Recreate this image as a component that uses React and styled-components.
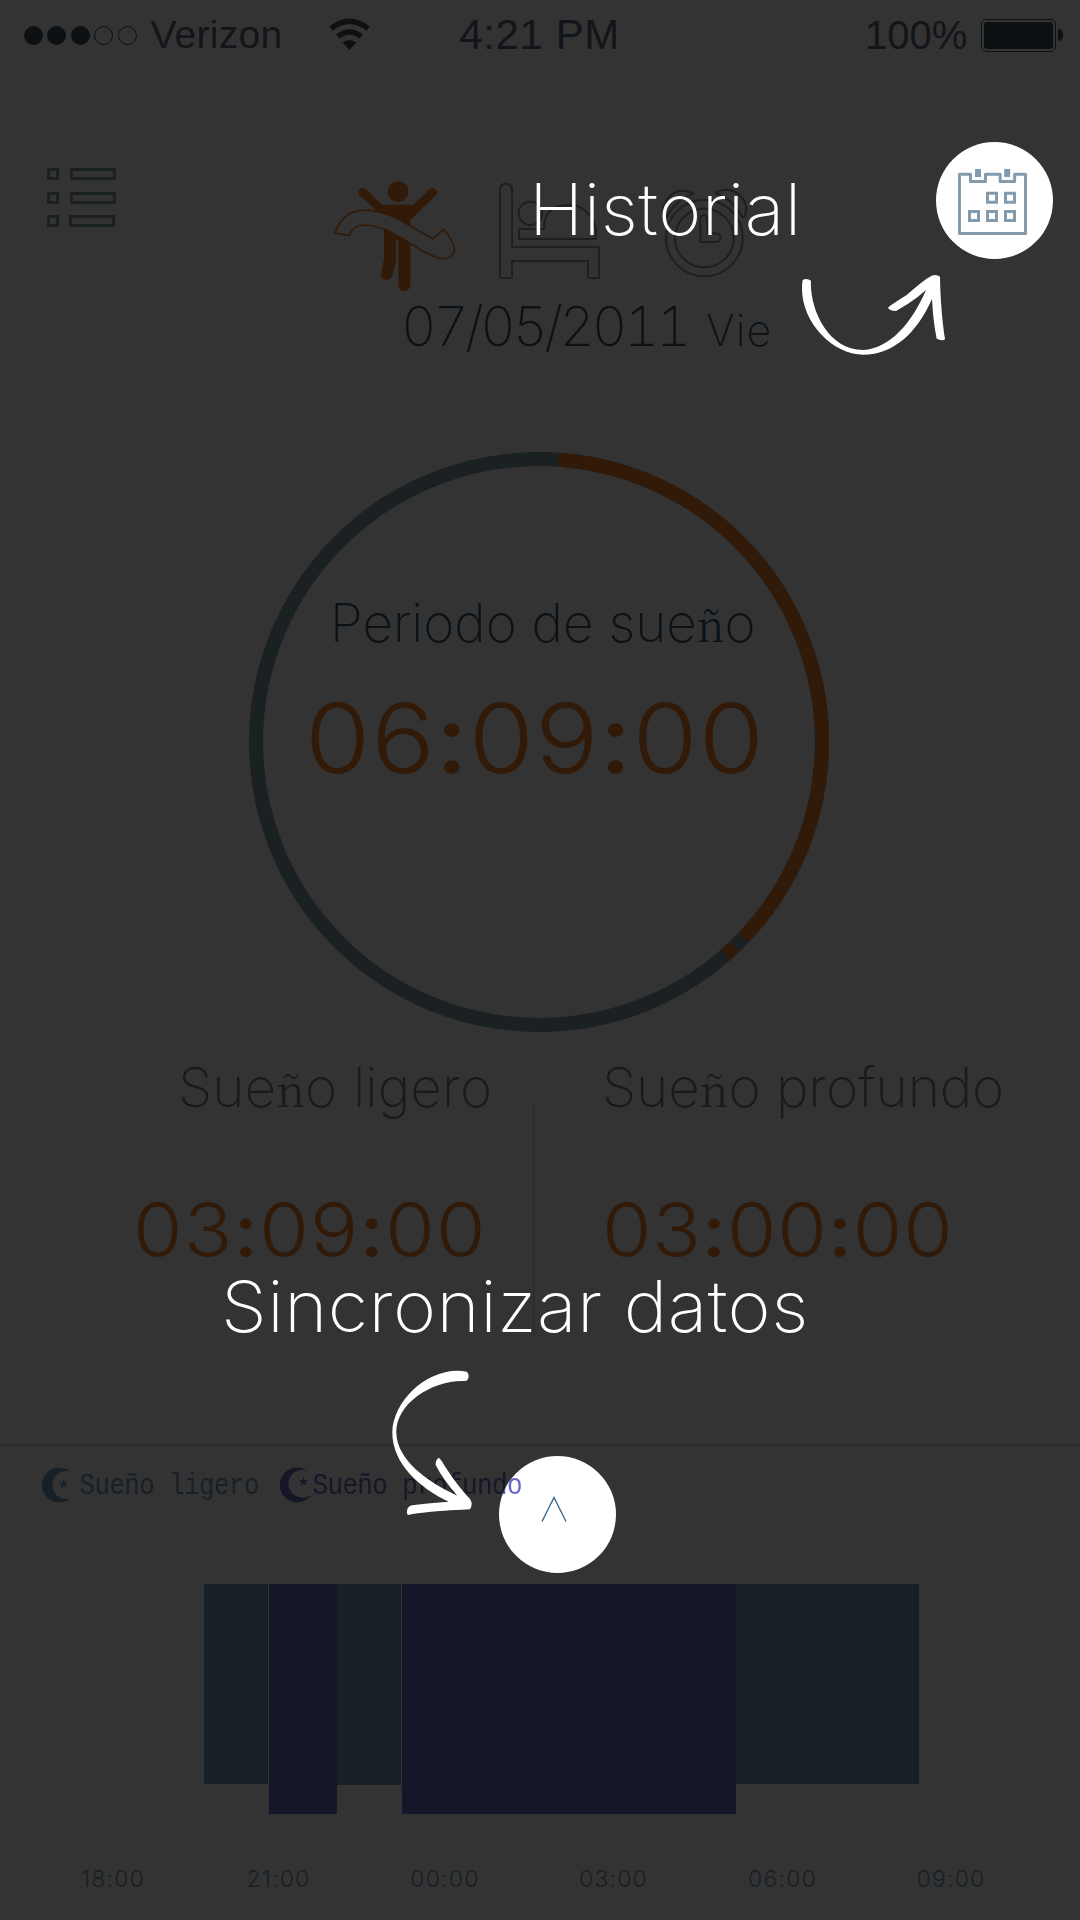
import React from "react";
import styled, { createGlobalStyle } from "styled-components";

const c = {
  bg: "#333333",
  ink: "#0a1217",
  status: "#0d1113",
  slate: "#1b2023",
  label: "#171b1e",
  orange: "#321a09",
  light: "#172027",
  deep: "#151627",
  rule: "#2d2d2d",
};

const Global = createGlobalStyle`
  * { box-sizing: border-box; }
  body { margin: 0; background: ${c.bg}; }
  svg { display: block; }
`;

const Screen = styled.main`
  position: relative;
  display: flex;
  flex-direction: column;
  width: 1080px;
  height: 1920px;
  overflow: hidden;
  background: ${c.bg};
  font-family: Inter, "Liberation Sans", sans-serif;
  font-weight: 200;
  color: ${c.ink};
  white-space: nowrap;
`;

/* ---- status bar ---- */
const StatusBar = styled.header`
  display: flex;
  align-items: center;
  height: 70px;
  padding: 0 17px 0 23.5px;
  font-family: "Liberation Sans", Arial, sans-serif;
  font-weight: 400;
  color: #121519;
`;
const Signal = styled.div`
  display: flex;
  gap: 4.6px;
  margin-right: 13.5px;
`;
const Dot = styled.i`
  width: 19px;
  height: 19px;
  border-radius: 50%;
  border: 1.5px solid ${c.status};
  background: ${(p) => (p.$on ? c.status : "transparent")};
`;
const StatusText = styled.span`
  font-size: ${(p) => p.$size}px;
  letter-spacing: ${(p) => p.$track || 0}px;
  line-height: 72px;
  width: ${(p) => p.$w}px;
`;
const Wifi = styled.svg`
  margin: 0 89px 2px 0;
`;
const Battery = styled.div`
  display: flex;
  align-items: center;
  gap: 2px;
`;
const Cell = styled.div`
  width: 75px;
  height: 33px;
  padding: 2px;
  border: 1.5px solid ${c.status};
  border-radius: 5px;
  &::before {
    content: "";
    display: block;
    height: 100%;
    border-radius: 3px;
    background: ${c.status};
  }
`;
const Tip = styled.div`
  width: 5px;
  height: 12px;
  border-radius: 0 5px 5px 0;
  background: ${c.status};
`;

/* ---- header ---- */
const Header = styled.nav`
  display: flex;
  align-items: flex-start;
  height: 229px;
  padding: 72px 27px 0 47px;
`;
const MenuButton = styled.div`
  display: flex;
  flex-direction: column;
  gap: 12px;
  width: 287px;
  padding-top: 26px;
`;
const MenuRow = styled.div`
  display: flex;
  gap: 11px;
  height: 12px;
  &:last-child { gap: 10px; margin-top: -1px; }
`;
const Box = styled.i`
  width: ${(p) => p.$w}px;
  height: 12px;
  border: 3px solid ${c.slate};
`;
const Mode = styled.svg`
  margin: ${(p) => p.$m};
  fill: none;
  stroke: ${c.slate};
  stroke-width: 6;
  stroke-linejoin: round;
  stroke-linecap: round;
`;
const Spot = styled.button`
  display: flex;
  justify-content: center;
  width: 117px;
  height: 117px;
  padding: ${(p) => p.$pad};
  border: 0;
  border-radius: 50%;
  background: #fff;
`;
const CalendarSpot = styled(Spot)`
  margin-left: auto;
`;

/* ---- date ---- */
const DateLine = styled.div`
  display: flex;
  align-items: baseline;
  height: 153px;
  padding-left: 401px;
  font-size: 55px;
  line-height: 54px;
  font-variant-numeric: tabular-nums;
  letter-spacing: ${(p) => p.$track}px;
`;
const Weekday = styled.span`
  margin-left: 18px;
  font-size: 43px;
  letter-spacing: 1.3px;
`;

/* ---- ring ---- */
const Ring = styled.section`
  display: grid;
  width: 580px;
  height: 580px;
  margin-left: 249px;
  > * { grid-area: 1 / 1; }
`;
const RingText = styled.div`
  display: flex;
  flex-direction: column;
  padding-top: 141px;
`;
const Caption = styled.div`
  font-size: ${(p) => p.$size}px;
  line-height: 60px;
  letter-spacing: ${(p) => p.$track}px;
  padding-left: ${(p) => p.$x}px;
  color: ${(p) => p.$color || c.ink};
`;
const Enye = styled.span`
  font-family: "Noto Serif CJK SC", "Liberation Serif", serif;
  font-weight: 300;
  font-size: 0.8em;
  letter-spacing: 0;
`;
const Clock = styled.div`
  align-self: flex-start;
  margin: ${(p) => p.$top}px 0 0 ${(p) => p.$x}px;
  font-weight: 300;
  font-size: ${(p) => p.$size}px;
  line-height: 100px;
  letter-spacing: ${(p) => p.$track}px;
  color: ${c.orange};
  transform: scaleX(1.1);
  transform-origin: left;
`;
const Colon = styled.span`
  font-weight: 500;
`;

/* ---- light / deep totals ---- */
const Totals = styled.section`
  display: grid;
  grid-template-columns: 533px 2px 545px;
  height: 412px;
  padding-top: 25px;
`;
const Total = styled.div`
  display: flex;
  flex-direction: column;
`;
const Split = styled.div`
  height: 233px;
  margin-top: 47px;
  background: ${c.rule};
`;

/* ---- chart ---- */
const Chart = styled.section`
  display: flex;
  flex-direction: column;
  border-top: 3px solid ${c.rule};
`;
const Legend = styled.div`
  position: relative;
  z-index: 2;
  display: flex;
  height: 137px;
  padding: 20px 0 0 38.5px;
`;
const LegendText = styled.span`
  width: ${(p) => p.$w}px;
  margin-top: 3px;
  font-family: "Liberation Mono", monospace;
  font-weight: 400;
  font-size: 26px;
  line-height: 32px;
  height: 34px;
  letter-spacing: -0.65px;
  color: ${c.light};
  transform: scaleY(1.15);
`;
const DeepText = styled(LegendText)`
  color: transparent;
  background: radial-gradient(circle at 244.5px 41px, #6464cc 57px, ${c.deep} 58px);
  -webkit-background-clip: text;
  background-clip: text;
`;
const Bars = styled.div`
  display: flex;
  align-items: flex-start;
  height: 272px;
  padding-left: 204px;
`;
const Bar = styled.div`
  width: ${(p) => p.$w}px;
  height: ${(p) => p.$h}px;
  margin-right: ${(p) => p.$gap || 0}px;
  background: ${(p) => (p.$deep ? c.deep : c.light)};
`;
const Axis = styled.div`
  display: grid;
  grid-template-columns: 166px 165px 168px 169px 169px 168px;
  padding-left: 30px;
  font-size: 23px;
  line-height: 46px;
  letter-spacing: 1.2px;
  font-weight: 300;
  text-align: center;
  color: ${c.light};
`;

/* ---- coach marks floating over the page ---- */
const Hint = styled.p`
  position: absolute;
  z-index: 3;
  left: ${(p) => p.$x}px;
  top: ${(p) => p.$y}px;
  margin: 0;
  font-size: 71px;
  font-weight: 250;
  line-height: 80px;
  letter-spacing: 0.5px;
  color: #fff;
  transform: scaleX(1.035);
  transform-origin: left;
`;
const Arrow = styled.svg`
  position: absolute;
  z-index: 3;
  left: ${(p) => p.$x}px;
  top: ${(p) => p.$y}px;
  fill: #fff;
`;
const SyncSpot = styled(Spot)`
  position: absolute;
  z-index: 1;
  left: 499px;
  top: 1456px;
`;

const Time = ({ value, ...rest }) => {
  const [h, m, s] = value.split(":");
  return (
    <Clock {...rest}>
      {h}<Colon>:</Colon>{m}<Colon>:</Colon>{s}
    </Clock>
  );
};

const R = 283;
const pt = (deg) => {
  const a = (deg * Math.PI) / 180;
  return `${290 + R * Math.sin(a)} ${290 - R * Math.cos(a)}`;
};
const arc = (from, to) => `M${pt(from)}A${R} ${R} 0 0 1 ${pt(to)}`;

const star = (x, y, r) =>
  Array.from({ length: 10 }, (_, i) => {
    const a = (i * Math.PI) / 5;
    const k = i % 2 ? r * 0.4 : r;
    return `${x + k * Math.sin(a)},${y - k * Math.cos(a)}`;
  }).join(" ");

const bars = [
  { w: 64, h: 200, gap: 1 },
  { w: 68, h: 230, deep: true },
  { w: 64, h: 201, gap: 1 },
  { w: 334, h: 230, deep: true },
  { w: 183, h: 200 },
];

export default function App() {
  return (
    <Screen>
      <Global />
      <StatusBar>
        <Signal>
          {[1, 1, 1, 0, 0].map((on, i) => <Dot key={i} $on={on} />)}
        </Signal>
        <StatusText $size={39} $w={179} $track={0.3}>Verizon</StatusText>
        <Wifi width="41" height="32" viewBox="0 0 41 32">
          <g fill="none" stroke={c.status} strokeWidth="5.4">
            <path d="M2 10.5Q20.500 -4 39 10.500" />
            <path d="M8.800 18.500Q20.500 9.500 32.200 18.500" />
          </g>
          <path d="M13.500 24.500Q20.500 19.500 27.500 24.500L20.500 32Z" fill={c.status} />
        </Wifi>
        <StatusText $size={42} $w={406} $track={0.6}>4:21 PM</StatusText>
        <StatusText $size={40} $w={116}>100%</StatusText>
        <Battery><Cell /><Tip /></Battery>
      </StatusBar>

      <Header>
        <MenuButton>
          {[0, 1, 2].map((i) => <MenuRow key={i}><Box $w={12} /><Box $w={46} /></MenuRow>)}
        </MenuButton>
        <Mode $m="39px 42px 0 0" width="122" height="111" viewBox="942 153 366 333">
          <g fill={c.orange} stroke="none">
            <circle cx="1134" cy="185" r="31" />
            <path d="M1018 196Q1010 184 1018 177Q1028 170 1038 177L1086 224H1180L1229 177Q1240 170 1248 179Q1254 189 1246 198L1171 270V466Q1169 483 1153 483Q1137 483 1135 466V330H1128V392L1119 432Q1114 450 1098 450Q1082 447 1083 432L1092 388V262Z" />
          </g>
          <path fill={c.bg} stroke={c.orange} strokeWidth="5" strokeLinejoin="miter" d="M945 309C962 255 1005 236 1050 241C1130 250 1165 291 1239 326L1271 298C1290 320 1308 345 1302 366C1291 396 1255 386 1226 372C1165 344 1110 287 1032 285C1008 286 993 300 988 317Z" />
        </Mode>
        <Mode $m="40px 62px 0 0" width="102" height="98" viewBox="114 96 306 294">
          <path d="M120 381V116Q122 101 138 101Q154 101 156 116V291H414Q417 291 417 294V381Q417 384 414 384H388Q384 384 384 380V333H156V380Q156 384 152 384H123Q120 384 120 381Z" />
          <circle cx="211" cy="190" r="35" />
          <path d="M181 237H253V220C258 175 300 160 345 166C390 180 411 220 408 262Q408 267 403 267H181Q177 267 177 262V241Q177 237 181 237Z" />
        </Mode>
        <Mode $m="46px 0 0 0" width="86" height="90" viewBox="606 114 258 270">
          <circle cx="733" cy="264" r="115" />
          <circle cx="733" cy="264" r="88" />
          <path d="M721 270V205Q723 195 732 195Q741 196 742 205V250H770Q782 252 782 262Q781 275 770 276H727Q721 276 721 270Z" />
          <path d="M612 201C600 160 640 100 701 131Q650 148 626 192Q618 206 612 201ZM768 127C820 100 874 150 854 198Q846 206 841 192Q820 150 768 130Z" />
        </Mode>
        <CalendarSpot $pad="27px 4px 0 0">
          <svg width="69" height="66" viewBox="534 117 207 198" fill="none" stroke="#849bad" strokeWidth="9">
            <path strokeLinejoin="round" d="M538.500 310.500V133H571.500V154.500H616.500V133H660.500V154.500H704V133H736.500V310.500Z" />
            <path strokeWidth="18" d="M594 117V141M681.500 117V141" />
            <path d="M622.500 189.500h27v27h-27zM676.500 189.500h27v27h-27zM568.500 244.500h27v27h-27zM622.500 244.500h27v27h-27zM676.500 244.500h27v27h-27z" />
          </svg>
        </CalendarSpot>
      </Header>

      <DateLine $track={-3.4}>07/05/2011<Weekday>Vie</Weekday></DateLine>

      <Ring>
        <svg width="580" height="580" fill="none" strokeWidth="14">
          <circle cx="290" cy="290" r={R} stroke={c.slate} />
          <path d={arc(3.9, 133.2)} stroke={c.orange} />
          <path d={arc(135.6, 138.8)} stroke={c.orange} />
          <circle cx={290 + R * Math.sin(2.357)} cy={290 - R * Math.cos(2.357)} r="7" fill={c.slate} />
          <circle cx={290 + R * Math.sin(2.3125)} cy={290 - R * Math.cos(2.3125)} r="7" fill={c.orange} />
        </svg>
        <RingText>
          <Caption $size={53} $track={0} $x={81}>Periodo de sue<Enye>ñ</Enye>o</Caption>
          <Time value="06:09:00" $size={96} $track={0.9} $x={56} $top={34} />
        </RingText>
      </Ring>

      <Totals>
        <Total>
          <Caption $size={55} $track={0.05} $x={178} $color={c.label}>Sue<Enye>ñ</Enye>o ligero</Caption>
          <Time value="03:09:00" $size={73} $track={1.1} $x={133} $top={62} />
        </Total>
        <Split />
        <Total>
          <Caption $size={55} $track={-0.15} $x={67} $color={c.label}>Sue<Enye>ñ</Enye>o profundo</Caption>
          <Time value="03:00:00" $size={73} $track={0.7} $x={67} $top={62} />
        </Total>
      </Totals>

      <Chart>
        <Legend>
          <svg width="41" height="36" fill={c.light}>
            <path d="M31 4.500A17.300 17.300 0 1 0 31 31.500A14 14 0 1 1 31 4.500Z" />
            <polygon points={star(24.5, 17, 4.8)} />
          </svg>
          <LegendText $w={199}>Sueño ligero</LegendText>
          <svg width="34" height="36" fill={c.deep}>
            <path d="M28 3.500A17.400 17.400 0 1 0 33 27A14 14 0 1 1 28 3.500Z" />
            <polygon points={star(24.5, 14.500, 5)} />
          </svg>
          <DeepText $w={260}>Sueño profundo</DeepText>
        </Legend>
        <Bars>
          {bars.map((b, i) => <Bar key={i} $w={b.w} $h={b.h} $gap={b.gap} $deep={b.deep} />)}
        </Bars>
        <Axis>
          {["18:00", "21:00", "00:00", "03:00", "06:00", "09:00"].map((t) => <span key={t}>{t}</span>)}
        </Axis>
      </Chart>

      <Hint $x={529} $y={168.5}>Historial</Hint>
      <Arrow $x={800} $y={274} width="146" height="82" viewBox="60 432 438 246">
        <path d="M68 450Q80 443 93 452C88 530 140 660 250 660C330 655 395 580 438 480L412 502Q385 523 348 543Q330 543 324 534Q324 530 380 495Q430 450 455 437Q470 432 480 440C481 500 486 570 495 628Q490 635 470 626C463 590 458 550 456 507C410 610 340 674 250 674C150 674 50 560 68 450Z" />
      </Arrow>
      <Hint $x={221} $y={1265.5}>Sincronizar datos</Hint>
      <Arrow $x={391} $y={1370} width="82" height="146" viewBox="153 60 246 438">
        <path d="M380 65Q388 70 385 85Q381 95 376 93C280 88 165 160 169 250C172 330 260 395 352 437Q310 390 287 345Q286 330 296 323Q300 325 305 333C330 375 360 415 390 447Q400 462 390 478Q370 480 330 481C290 484 240 488 204 495Q198 490 203 475Q207 467 216 466C250 461 290 458 326 455C240 415 155 340 157 245C160 150 270 45 380 65Z" />
      </Arrow>
      <SyncSpot $pad="40px 8px 0 0">
        <svg width="26" height="26" fill="none" stroke="#336186" strokeWidth="1.300">
          <path d="M1 25.500L13 1.500L25 25.500" />
        </svg>
      </SyncSpot>
    </Screen>
  );
}
